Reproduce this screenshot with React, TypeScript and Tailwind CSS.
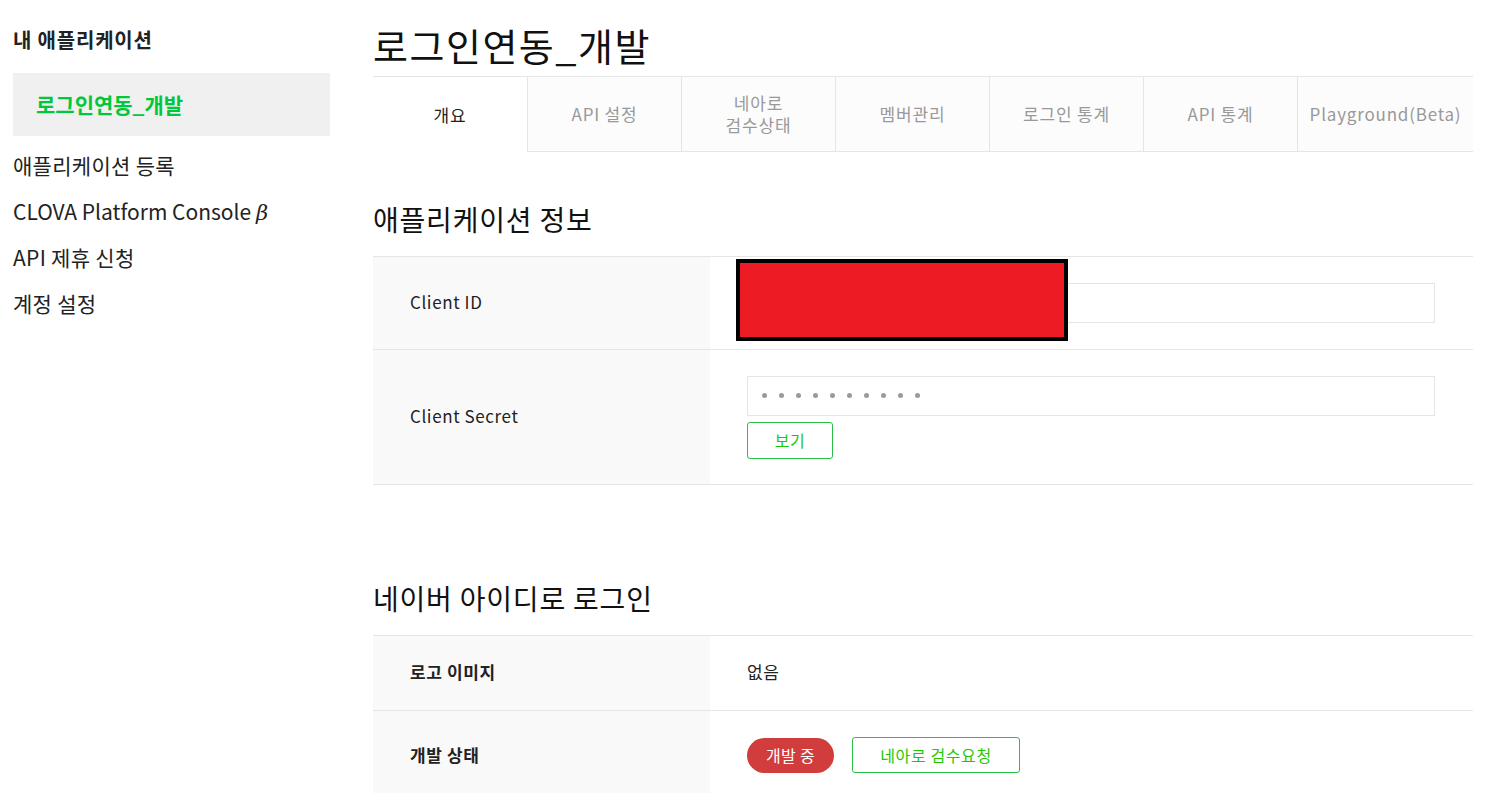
import React from 'react';

const tabs = ['개요', 'API 설정', '네아로\n검수상태', '멤버관리', '로그인 통계', 'API 통계', 'Playground(Beta)'];

const menu = ['애플리케이션 등록', 'API 제휴 신청', '계정 설정'];

function Sidebar() {
  return (
    <aside className="w-[330px] shrink-0 pl-[13px] pt-[26px]">
      <div className="h-[28px] leading-[28px] text-[20px] font-bold tracking-[0.8px] text-[#222]">내 애플리케이션</div>
      <div className="mt-[19px] h-[63px] bg-[#f0f0f0] pl-[23px] flex items-center text-[21px] font-bold text-[#00c73c]">
        로그인연동_개발
      </div>
      <ul className="mt-[6px] text-[21px] text-[#222]">
        <li className="h-[46px] leading-[46px] tracking-[0.3px]">{menu[0]}</li>
        <li className="h-[46px] leading-[46px]">
          CLOVA Platform Console <span className="italic font-['DejaVu_Serif',serif]">β</span>
        </li>
        <li className="h-[46px] leading-[46px] tracking-[0.3px]">{menu[1]}</li>
        <li className="h-[46px] leading-[46px] tracking-[0.3px]">{menu[2]}</li>
      </ul>
    </aside>
  );
}

function Tabs() {
  return (
    <div className="mt-[6px] flex h-[76px] border-t border-[#e5e5e5] text-[17px] tracking-[0.8px]">
      {tabs.map((t, i) => (
        <div
          key={t}
          className={
            i === 0
              ? 'w-[154px] flex items-center justify-center text-[#222] bg-white'
              : i === tabs.length - 1
              ? 'flex-1 flex items-center justify-center text-[#999] bg-[#fcfcfc] border-l border-b border-[#e5e5e5]'
              : 'w-[154px] flex items-center justify-center text-center leading-[22px] text-[#999] bg-[#fcfcfc] border-l border-b border-[#e5e5e5] whitespace-pre-line'
          }
        >
          {t}
        </div>
      ))}
    </div>
  );
}

function Row({ label, bold, height, children }: { label: string; bold?: boolean; height: string; children: React.ReactNode }) {
  return (
    <div className={`flex border-b border-[#e5e5e5] ${height}`}>
      <div className={`w-[337px] shrink-0 bg-[#f9f9f9] pl-[37px] pb-[3px] flex items-center text-[17px] tracking-[0.6px] text-[#222] ${bold ? 'font-semibold' : ''}`}>
        {label}
      </div>
      <div className="flex-1 pl-[37px] pr-[38px] flex flex-col justify-center">{children}</div>
    </div>
  );
}

export default function App() {
  return (
    <div className="flex w-[1500px] h-[793px] overflow-hidden bg-white font-['Noto_Sans_CJK_KR','Noto_Sans',sans-serif] text-[#222]">
      <Sidebar />
      <main className="ml-[43px] w-[1100px] pt-[20px]">
        <h1 className="h-[50px] leading-[50px] text-[38px] font-normal tracking-[1.5px] text-[#111]">로그인연동_개발</h1>
        <Tabs />

        <h2 className="mt-[47px] h-[40px] leading-[40px] text-[28px] tracking-[0.8px] text-[#111]">애플리케이션 정보</h2>
        <div className="mt-[17px] border-t border-[#e5e5e5]">
          <Row label="Client ID" height="h-[93px]">
            <div className="relative">
              <div className="h-[40px] border border-[#e5e5e5] bg-white" />
              <div className="absolute left-[-11px] top-[-24px] w-[332px] h-[82px] border-[4px] border-black bg-[#ed1c24]" />
            </div>
          </Row>
          <Row label="Client Secret" height="h-[135px]">
            <div className="h-[40px] border border-[#e5e5e5] bg-white flex items-center pl-[14px] gap-[12px]">
              {Array.from({ length: 10 }).map((_, i) => (
                <span key={i} className="w-[5px] h-[5px] rounded-full bg-[#9a9a9a]" />
              ))}
            </div>
            <button className="mt-[6px] w-[86px] h-[37px] border border-[#2bbd4a] rounded-[3px] bg-white text-[16px] tracking-[0.5px] text-[#1ec800]">
              보기
            </button>
          </Row>
        </div>

        <h2 className="mt-[93px] h-[40px] leading-[40px] text-[28px] tracking-[0.8px] text-[#111]">네이버 아이디로 로그인</h2>
        <div className="mt-[17px] border-t border-[#e5e5e5]">
          <Row label="로고 이미지" bold height="h-[75px]">
            <div className="text-[17px] tracking-[0.5px] text-[#222] pb-[3px]">없음</div>
          </Row>
          <div className="flex h-[88px]">
            <div className="w-[337px] shrink-0 bg-[#f9f9f9] pl-[37px] flex items-center text-[17px] font-semibold tracking-[0.6px] text-[#222]">
              개발 상태
            </div>
            <div className="flex-1 pl-[37px] flex items-center gap-[18px]">
              <span className="w-[87px] h-[35px] rounded-full bg-[#d13c3c] text-white text-[16px] tracking-[0.3px] flex items-center justify-center">
                개발 중
              </span>
              <button className="w-[168px] h-[36px] border border-[#2bbd4a] rounded-[3px] bg-white text-[16px] tracking-[0.6px] text-[#1ec800]">
                네아로 검수요청
              </button>
            </div>
          </div>
        </div>
      </main>
    </div>
  );
}
